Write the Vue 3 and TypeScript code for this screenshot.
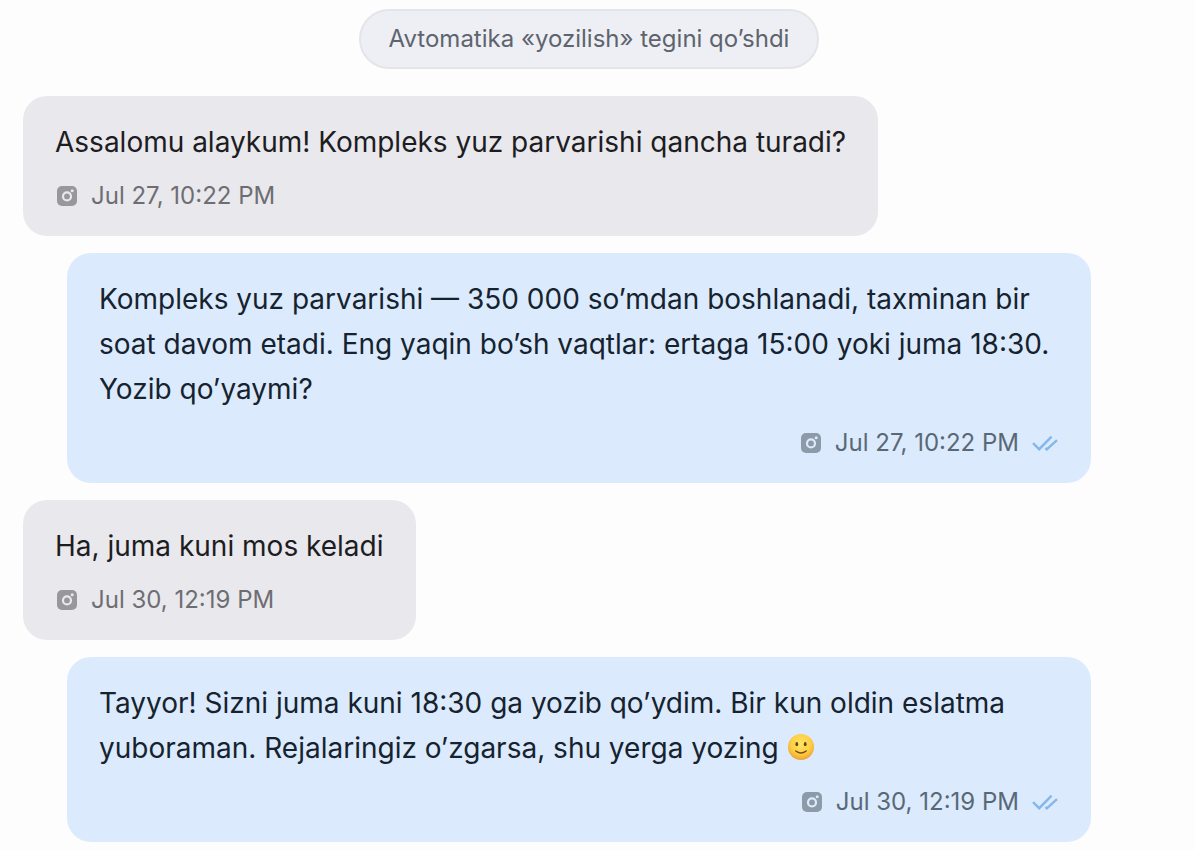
<script setup lang="ts">
interface Message {
  id: number
  side: 'in' | 'out'
  text: string
  time: string
  smile?: boolean
}

const notice = 'Avtomatika «yozilish» tegini qo’shdi'

const messages: Message[] = [
  { id: 1, side: 'in', text: 'Assalomu alaykum! Kompleks yuz parvarishi qancha turadi?', time: 'Jul 27, 10:22 PM' },
  {
    id: 2,
    side: 'out',
    text: 'Kompleks yuz parvarishi — 350 000 so’mdan boshlanadi, taxminan bir soat davom etadi. Eng yaqin bo’sh vaqtlar: ertaga 15:00 yoki juma 18:30. Yozib qo’yaymi?',
    time: 'Jul 27, 10:22 PM',
  },
  { id: 3, side: 'in', text: 'Ha, juma kuni mos keladi', time: 'Jul 30, 12:19 PM' },
  {
    id: 4,
    side: 'out',
    text: 'Tayyor! Sizni juma kuni 18:30 ga yozib qo’ydim. Bir kun oldin eslatma yuboraman. Rejalaringiz o’zgarsa, shu yerga yozing',
    time: 'Jul 30, 12:19 PM',
    smile: true,
  },
]
</script>

<template>
  <main class="chat">
    <div class="notice">{{ notice }}</div>
    <article v-for="m in messages" :key="m.id" class="bubble" :class="m.side">
      <p class="text">
        {{ m.text }}
        <svg v-if="m.smile" class="smile" viewBox="0 0 28 28" role="img" aria-label="🙂">
          <defs>
            <radialGradient id="face" cx="50%" cy="38%" r="64%">
              <stop offset="0" stop-color="#ffe566" />
              <stop offset="0.6" stop-color="#fdcf45" />
              <stop offset="1" stop-color="#ee9d2c" />
            </radialGradient>
          </defs>
          <circle cx="14" cy="14" r="13" fill="url(#face)" />
          <ellipse cx="9.8" cy="11.2" rx="1.4" ry="2.1" fill="#6b4312" />
          <ellipse cx="18.2" cy="11.2" rx="1.4" ry="2.1" fill="#6b4312" />
          <path d="M8.8 18 Q14 22 19.2 18" fill="none" stroke="#7a4d17" stroke-width="1.5" stroke-linecap="round" />
        </svg>
      </p>
      <footer class="meta">
        <svg class="source" viewBox="0 0 20 20" aria-hidden="true">
          <rect class="plate" width="20" height="20" rx="5" />
          <circle class="lens" cx="10" cy="10.4" r="4" />
          <circle class="dot" cx="15.2" cy="4.7" r="1.5" />
        </svg>
        <time>{{ m.time }}</time>
        <svg v-if="m.side === 'out'" class="ticks" viewBox="0 0 28 16" aria-hidden="true">
          <path d="M2 8.2 L8.2 14.2 L20.6 1.6 M14.4 13 L15.8 14.4 L26 5.2" />
        </svg>
      </footer>
    </article>
  </main>
</template>

<style>
body {
  margin: 0;
  background: #fdfdfd;
}
</style>

<style scoped>
.chat {
  display: flex;
  flex-direction: column;
  align-items: flex-start;
  gap: 17px;
  padding: 9px 40px 8px 23px;
  font-family: Inter, "Liberation Sans", sans-serif;
}
.notice {
  align-self: center;
  box-sizing: border-box;
  margin-bottom: 10px;
  padding: 0 28px;
  border: 2px solid #e4e5e8;
  border-radius: 30px;
  background: #eeeff4;
  color: #5d646e;
  font-size: 24px;
  line-height: 56px;
}
.bubble {
  padding: 24px 32px;
  border-radius: 24px;
}
.in {
  background: #e9e8ec;
  color: #1c1d22;
}
.out {
  align-self: stretch;
  margin: 0 64px 0 44px;
  background: #dbebfd;
  color: #16232f;
}
.text {
  margin: 0;
  font-size: 28px;
  line-height: 45px;
}
.smile {
  width: 28px;
  height: 28px;
  vertical-align: -3px;
}
.meta {
  display: flex;
  align-items: center;
  margin-top: 15px;
  color: #6d6e73;
  font-size: 24px;
  line-height: 32px;
}
.out .meta {
  justify-content: flex-end;
  color: #5a6876;
}
.source {
  width: 20px;
  height: 20px;
  margin: 0 14px 0 2px;
}
.plate {
  fill: #98989c;
}
.out .plate {
  fill: #8d9aa8;
}
.lens {
  fill: none;
  stroke: #e9e8ec;
  stroke-width: 2.2;
}
.dot {
  fill: #e9e8ec;
}
.out .lens {
  stroke: #dbebfd;
}
.out .dot {
  fill: #dbebfd;
}
.ticks {
  width: 28px;
  height: 16px;
  margin-left: 12px;
}
.ticks path {
  fill: none;
  stroke: #86b7ea;
  stroke-width: 2.4;
}
</style>
